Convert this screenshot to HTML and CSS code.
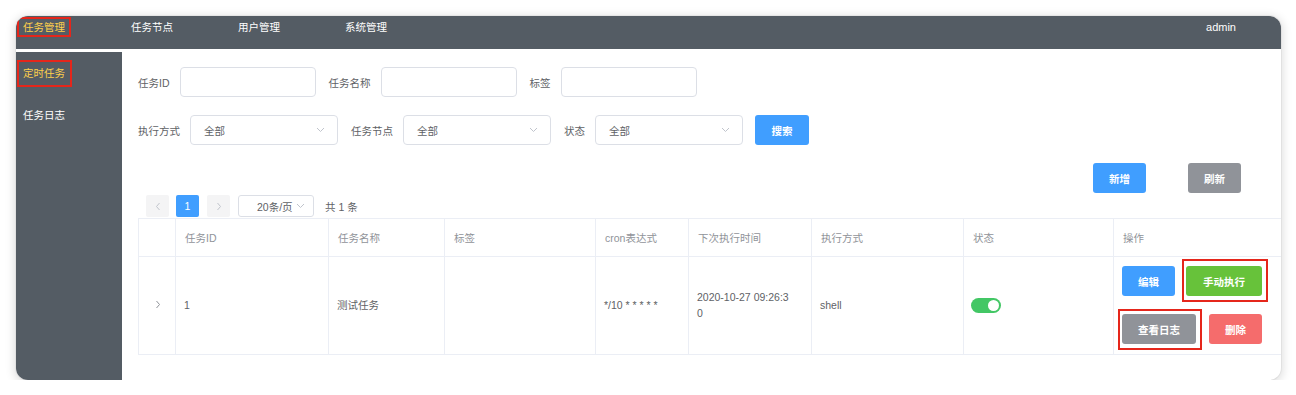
FILE: index.html
```html
<!DOCTYPE html>
<html lang="zh-CN">
<head>
    <meta charset="UTF-8">
    <meta name="viewport" content="width=device-width, initial-scale=1.0">
    <title>定时任务</title>
    <link rel="stylesheet" href="styles.css">
</head>
<body>
    <div class="window">
        <header class="topbar">
            <nav class="topnav">
                <span class="topnav-item active"><span class="mark mark-top">任务管理</span></span>
                <span class="topnav-item">任务节点</span>
                <span class="topnav-item">用户管理</span>
                <span class="topnav-item">系统管理</span>
            </nav>
            <div class="user">admin</div>
        </header>

        <div class="frame">
            <aside class="sidebar">
                <div class="side-item active"><span class="mark mark-side">定时任务</span></div>
                <div class="side-item">任务日志</div>
            </aside>

            <main class="main">
                <div class="form-row">
                    <div class="field">
                        <label>任务ID</label>
                        <div class="input"></div>
                    </div>
                    <div class="field">
                        <label>任务名称</label>
                        <div class="input"></div>
                    </div>
                    <div class="field">
                        <label>标签</label>
                        <div class="input"></div>
                    </div>
                </div>

                <div class="form-row">
                    <div class="field">
                        <label>执行方式</label>
                        <div class="select">
                            <span>全部</span>
                            <svg class="caret" width="9" height="6" viewBox="0 0 9 6"><path d="M1 1l3.5 3.5L8 1" fill="none" stroke="#c0c4cc" stroke-width="1"/></svg>
                        </div>
                    </div>
                    <div class="field">
                        <label>任务节点</label>
                        <div class="select">
                            <span>全部</span>
                            <svg class="caret" width="9" height="6" viewBox="0 0 9 6"><path d="M1 1l3.5 3.5L8 1" fill="none" stroke="#c0c4cc" stroke-width="1"/></svg>
                        </div>
                    </div>
                    <div class="field">
                        <label>状态</label>
                        <div class="select">
                            <span>全部</span>
                            <svg class="caret" width="9" height="6" viewBox="0 0 9 6"><path d="M1 1l3.5 3.5L8 1" fill="none" stroke="#c0c4cc" stroke-width="1"/></svg>
                        </div>
                    </div>
                    <button class="btn btn-primary btn-search">搜索</button>
                </div>

                <div class="toolbar">
                    <button class="btn btn-primary">新增</button>
                    <button class="btn btn-info">刷新</button>
                </div>

                <div class="pager">
                    <span class="pager-btn">
                        <svg width="6" height="9" viewBox="0 0 6 9"><path d="M4.5 1L1.5 4.5 4.5 8" fill="none" stroke="#c0c4cc"/></svg>
                    </span>
                    <span class="pager-num">1</span>
                    <span class="pager-btn">
                        <svg width="6" height="9" viewBox="0 0 6 9"><path d="M1.5 1l3 3.5-3 3.5" fill="none" stroke="#c0c4cc"/></svg>
                    </span>
                    <div class="pager-size">
                        <span>20条/页</span>
                        <svg width="9" height="6" viewBox="0 0 9 6"><path d="M1 1l3.5 3.5L8 1" fill="none" stroke="#c0c4cc" stroke-width="1"/></svg>
                    </div>
                    <span class="pager-total">共 1 条</span>
                </div>

                <table class="task-table">
                    <colgroup>
                        <col style="width:37px">
                        <col style="width:153px">
                        <col style="width:116px">
                        <col style="width:151px">
                        <col style="width:93px">
                        <col style="width:123px">
                        <col style="width:152px">
                        <col style="width:150px">
                        <col style="width:168px">
                    </colgroup>
                    <thead>
                        <tr>
                            <th></th>
                            <th>任务ID</th>
                            <th>任务名称</th>
                            <th>标签</th>
                            <th>cron表达式</th>
                            <th>下次执行时间</th>
                            <th>执行方式</th>
                            <th>状态</th>
                            <th>操作</th>
                        </tr>
                    </thead>
                    <tbody>
                        <tr>
                            <td class="expand">
                                <svg width="6" height="9" viewBox="0 0 6 9"><path d="M1.5 1l3 3.5-3 3.5" fill="none" stroke="#909399"/></svg>
                            </td>
                            <td>1</td>
                            <td>测试任务</td>
                            <td></td>
                            <td>*/10 * * * * *</td>
                            <td><div class="next-time">2020-10-27 09:26:30</div></td>
                            <td>shell</td>
                            <td><span class="switch"><span class="knob"></span></span></td>
                            <td class="ops">
                                <div class="ops-row">
                                    <button class="btn btn-primary">编辑</button>
                                    <button class="btn btn-success mark mark-run">手动执行</button>
                                </div>
                                <div class="ops-row">
                                    <button class="btn btn-info mark mark-log">查看日志</button>
                                    <button class="btn btn-danger">删除</button>
                                </div>
                            </td>
                        </tr>
                    </tbody>
                </table>
            </main>
        </div>
    </div>
</body>
</html>
```

FILE: styles.css
```css
body {
    margin: 0;
    background: #fff;
    font-family: "Liberation Sans", "Noto Sans CJK SC", sans-serif;
    font-size: 10.5px;
    color: #606266;
    overflow: hidden;
}
.window {
    margin: 16px 15px 0 16px;
    height: 364px;
    border-radius: 12px;
    overflow: hidden;
    background: #fff;
    box-shadow: 0 0 0 1px rgba(0,0,0,0.04), 0 2px 10px 2px rgba(0,0,0,0.13);
    display: flex;
    flex-direction: column;
}

/* 顶部菜单 */
.topbar {
    height: 33px;
    flex: none;
    box-sizing: border-box;
    background: #545c64;
    display: flex;
    padding: 5px 0 0 7px;
    line-height: 13px;
    color: #fff;
}
.topnav {
    display: flex;
}
.topnav-item {
    width: 107px;
}
.topnav-item:first-child {
    width: 108px;
}
.topnav-item.active {
    color: #ffd04b;
}
.user {
    margin-left: auto;
    padding-right: 45px;
    font-size: 11px;
}

/* 标注框 */
.mark {
    position: relative;
}
.mark::after {
    content: "";
    position: absolute;
    border: 2px solid #e5261b;
}
.mark-top::after {
    left: -6px;
    right: -6px;
    top: -4px;
    bottom: -4px;
}
.mark-side::after {
    left: -6px;
    right: -7px;
    top: -7px;
    bottom: -7px;
}
.mark-run::after {
    left: -4px;
    right: -6px;
    top: -7px;
    bottom: -6px;
}
.mark-log::after {
    left: -4px;
    right: -6px;
    top: -5px;
    bottom: -6px;
}

.frame {
    flex: 1;
    display: flex;
    min-height: 0;
}
.sidebar {
    width: 106px;
    flex: none;
    margin-top: 3px;
    background: #545c64;
}
.side-item {
    height: 42px;
    padding-left: 7px;
    display: flex;
    align-items: center;
    color: #fff;
    line-height: 13px;
}
.side-item.active {
    color: #ffd04b;
}

.main {
    flex: 1;
    min-width: 0;
    padding: 18px 0 0 16px;
    overflow: hidden;
}

/* 搜索表单 */
.form-row {
    display: flex;
    align-items: center;
    height: 30px;
    margin-bottom: 18px;
}
.field {
    display: flex;
    align-items: center;
}
.field + .field {
    margin-left: 13px;
}
.field label {
    margin-right: 10px;
    color: #606266;
}
.input, .select {
    box-sizing: border-box;
    height: 30px;
    border: 1px solid #dcdfe6;
    border-radius: 4px;
    background: #fff;
}
.input {
    width: 136px;
}
.select {
    width: 148px;
    display: flex;
    align-items: center;
    padding: 0 12px 0 13px;
}
.select .caret {
    margin-left: auto;
}

.btn {
    font-family: inherit;
    font-size: 10.5px;
    font-weight: bold;
    height: 30px;
    border: none;
    border-radius: 3px;
    color: #fff;
    padding: 0;
    width: 53px;
    cursor: pointer;
}
.btn-primary { background: #409eff; }
.btn-info { background: #909399; }
.btn-success { background: #67c23a; }
.btn-danger { background: #f56c6c; }
.btn-search {
    margin-left: 12px;
    width: 54px;
}

.toolbar {
    display: flex;
    justify-content: flex-end;
    gap: 42px;
    padding-right: 40px;
    height: 30px;
}

/* 分页 */
.pager {
    display: flex;
    align-items: center;
    height: 22px;
    margin-top: 2px;
    padding-left: 8px;
}
.pager-btn, .pager-num {
    width: 23px;
    height: 22px;
    border-radius: 2px;
    display: flex;
    align-items: center;
    justify-content: center;
    background: #f4f4f5;
}
.pager-num {
    background: #409eff;
    color: #fff;
    margin: 0 8px 0 7px;
}
.pager-size {
    box-sizing: border-box;
    width: 76px;
    height: 22px;
    margin-left: 8px;
    border: 1px solid #dcdfe6;
    border-radius: 3px;
    display: flex;
    align-items: center;
    justify-content: space-between;
    padding: 0 8px 0 18px;
}
.pager-total {
    margin-left: 11px;
}

/* 表格 */
.task-table {
    margin-top: 1px;
    width: 1143px;
    table-layout: fixed;
    border-collapse: collapse;
}
.task-table th, .task-table td {
    border: 1px solid #ebeef5;
    text-align: left;
    vertical-align: middle;
}
.task-table th {
    height: 37px;
    padding: 0 9px;
    font-weight: normal;
    color: #909399;
}
.task-table td {
    padding: 9px 8px 10px 8px;
    line-height: 16px;
}
.task-table td.expand {
    text-align: center;
    padding-left: 10px;
}
.next-time {
    width: 96px;
    word-break: break-all;
}
.switch {
    display: inline-block;
    width: 30px;
    height: 15px;
    border-radius: 8px;
    background: #43c765;
    position: relative;
    vertical-align: middle;
    margin-left: -1px;
}
.knob {
    position: absolute;
    right: 2px;
    top: 2px;
    width: 11px;
    height: 11px;
    border-radius: 50%;
    background: #fff;
}
.ops-row {
    display: flex;
}
.ops-row + .ops-row {
    margin-top: 18px;
}
.ops-row .btn-success {
    width: 76px;
    margin-left: 11px;
}
.ops-row .btn-info {
    width: 74px;
}
.ops-row .btn-danger {
    margin-left: 13px;
}
```
